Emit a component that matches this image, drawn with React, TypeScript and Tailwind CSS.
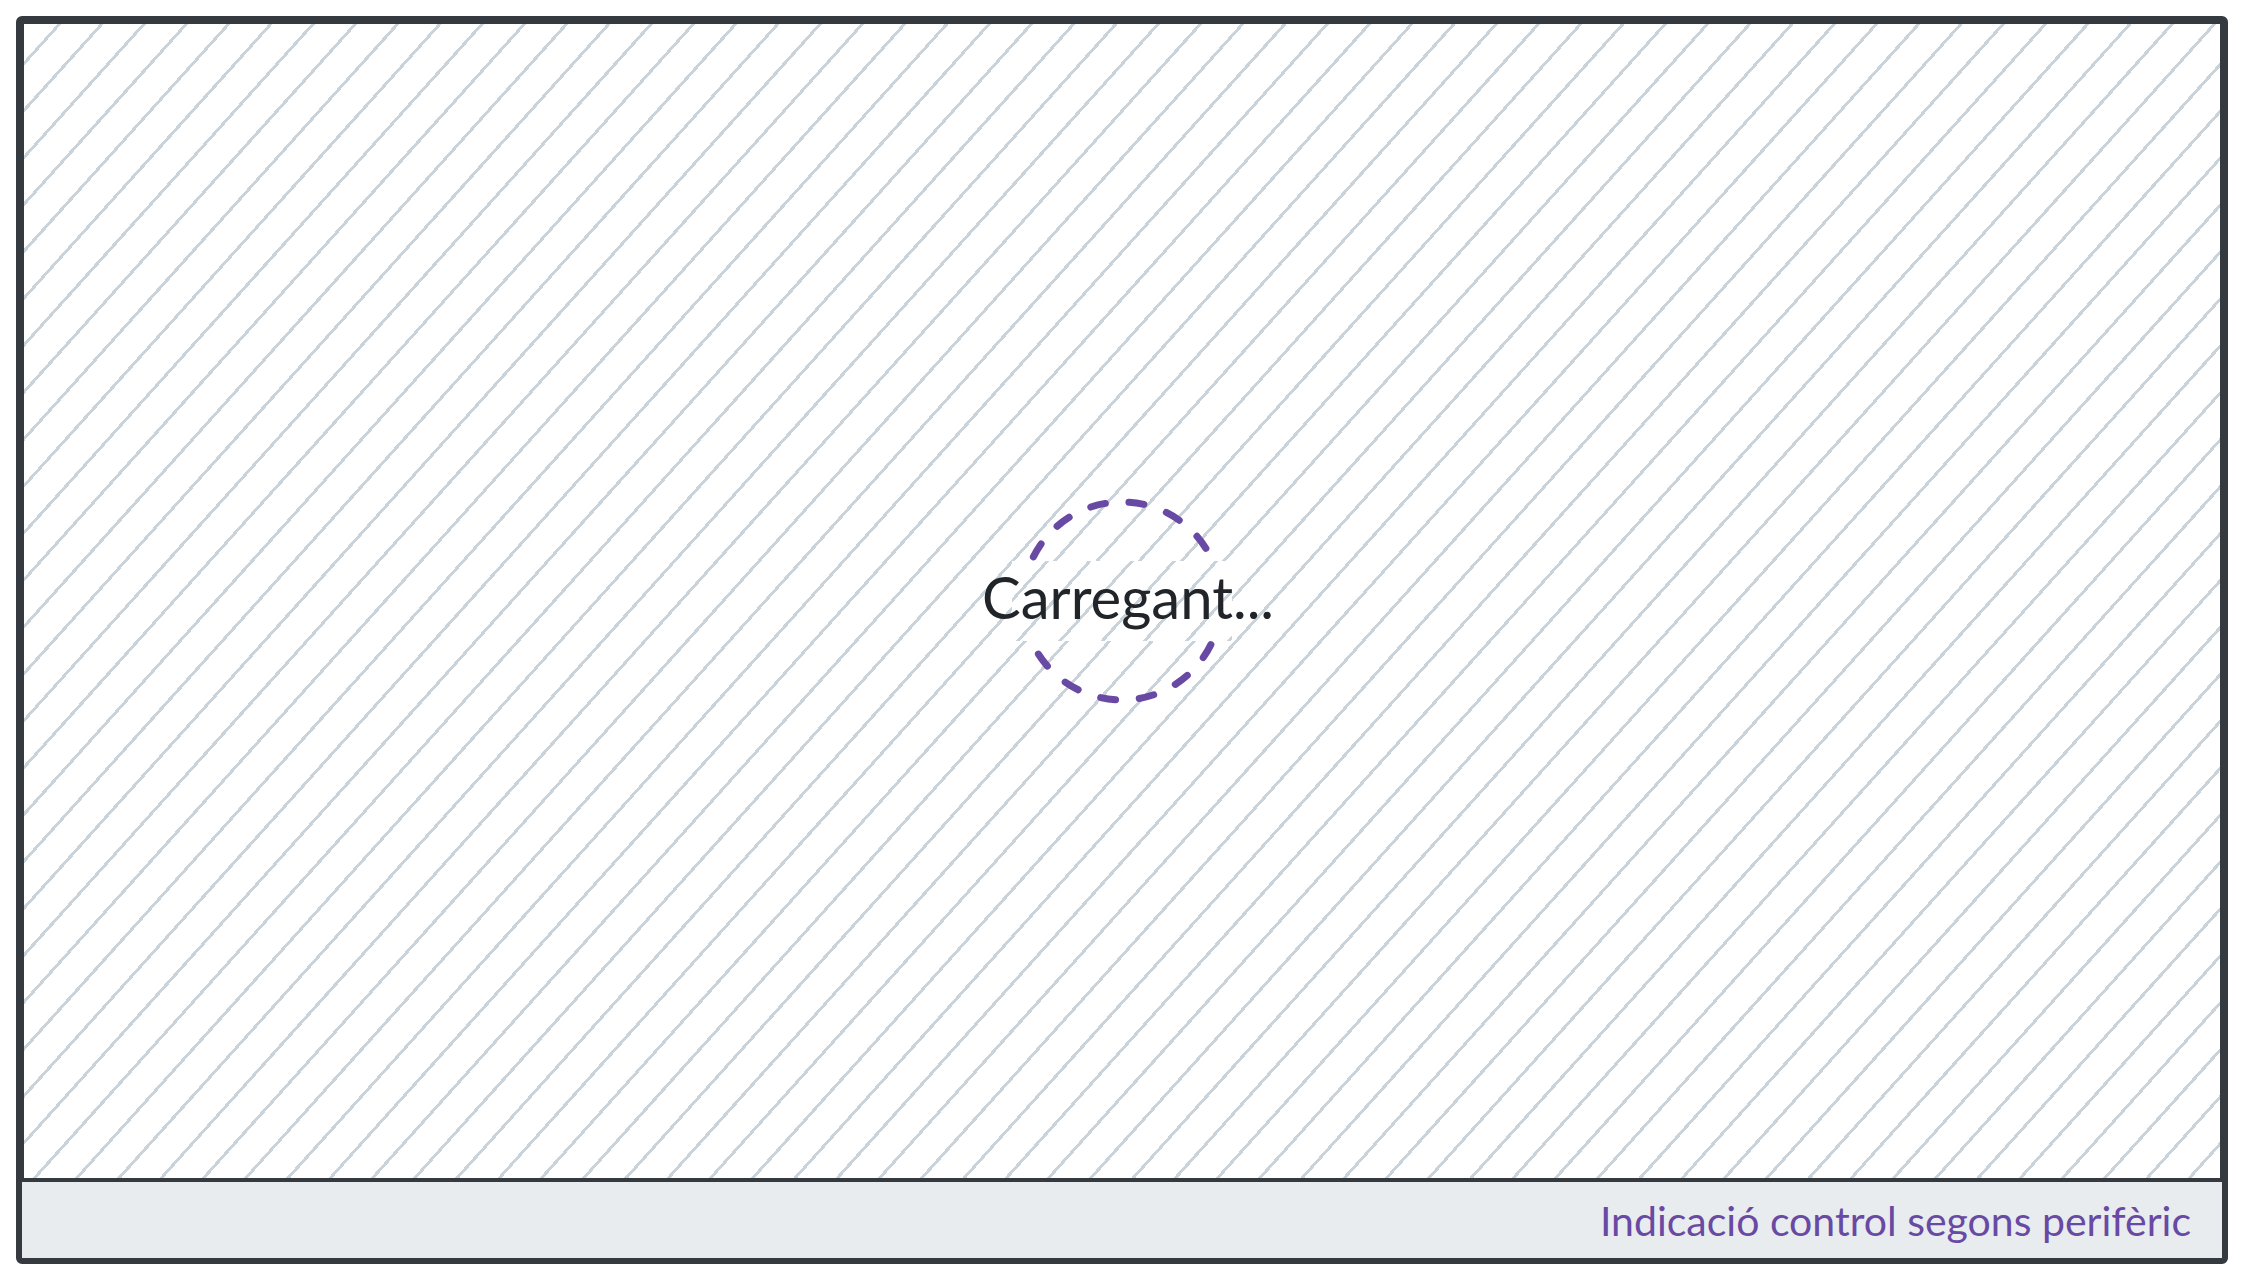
import React from 'react';

// diagonal hatch used for the canvas and the label plate
const hatch =
  'bg-[image:repeating-linear-gradient(132deg,transparent_0px,transparent_24.9px,#cbd3da_24.9px,#cbd3da_27.9px,transparent_27.9px,transparent_31.4px)]';

const Spinner = () => (
  <div className="relative w-[212px] h-[212px]">
    <svg width="212" height="212" viewBox="0 0 212 212" className="block">
      <circle
        cx="106"
        cy="106"
        r="99"
        fill="none"
        stroke="#6849a3"
        strokeWidth="7"
        strokeLinecap="round"
        strokeDasharray="15 23.88"
        strokeDashoffset="-6.3"
      />
    </svg>
    <div
      className={`absolute left-[-4px] top-[66px] w-[220px] h-[80px] bg-white ${hatch} flex items-center justify-center`}
    >
      <span className="whitespace-nowrap leading-none text-[58px] text-[#212529] font-['Lato',sans-serif] -mt-2 ml-3">
        Carregant...
      </span>
    </div>
  </div>
);

export default function App() {
  return (
    <div className="h-screen w-full bg-white p-4">
      <div className="h-full flex flex-col border-[6px] border-[#343a40] rounded-md overflow-hidden">
        <div className={`flex-1 border-2 border-[#343a40] bg-white ${hatch} flex items-center justify-center`}>
          <Spinner />
        </div>
        <div className="h-[78px] shrink-0 border-t-2 border-[#343a40] bg-[#e9ecef] flex items-center justify-end pr-[31px]">
          <span className="leading-none text-[41px] text-[#6849a3] font-['Lato',sans-serif]">
            Indicació control segons perifèric
          </span>
        </div>
      </div>
    </div>
  );
}
